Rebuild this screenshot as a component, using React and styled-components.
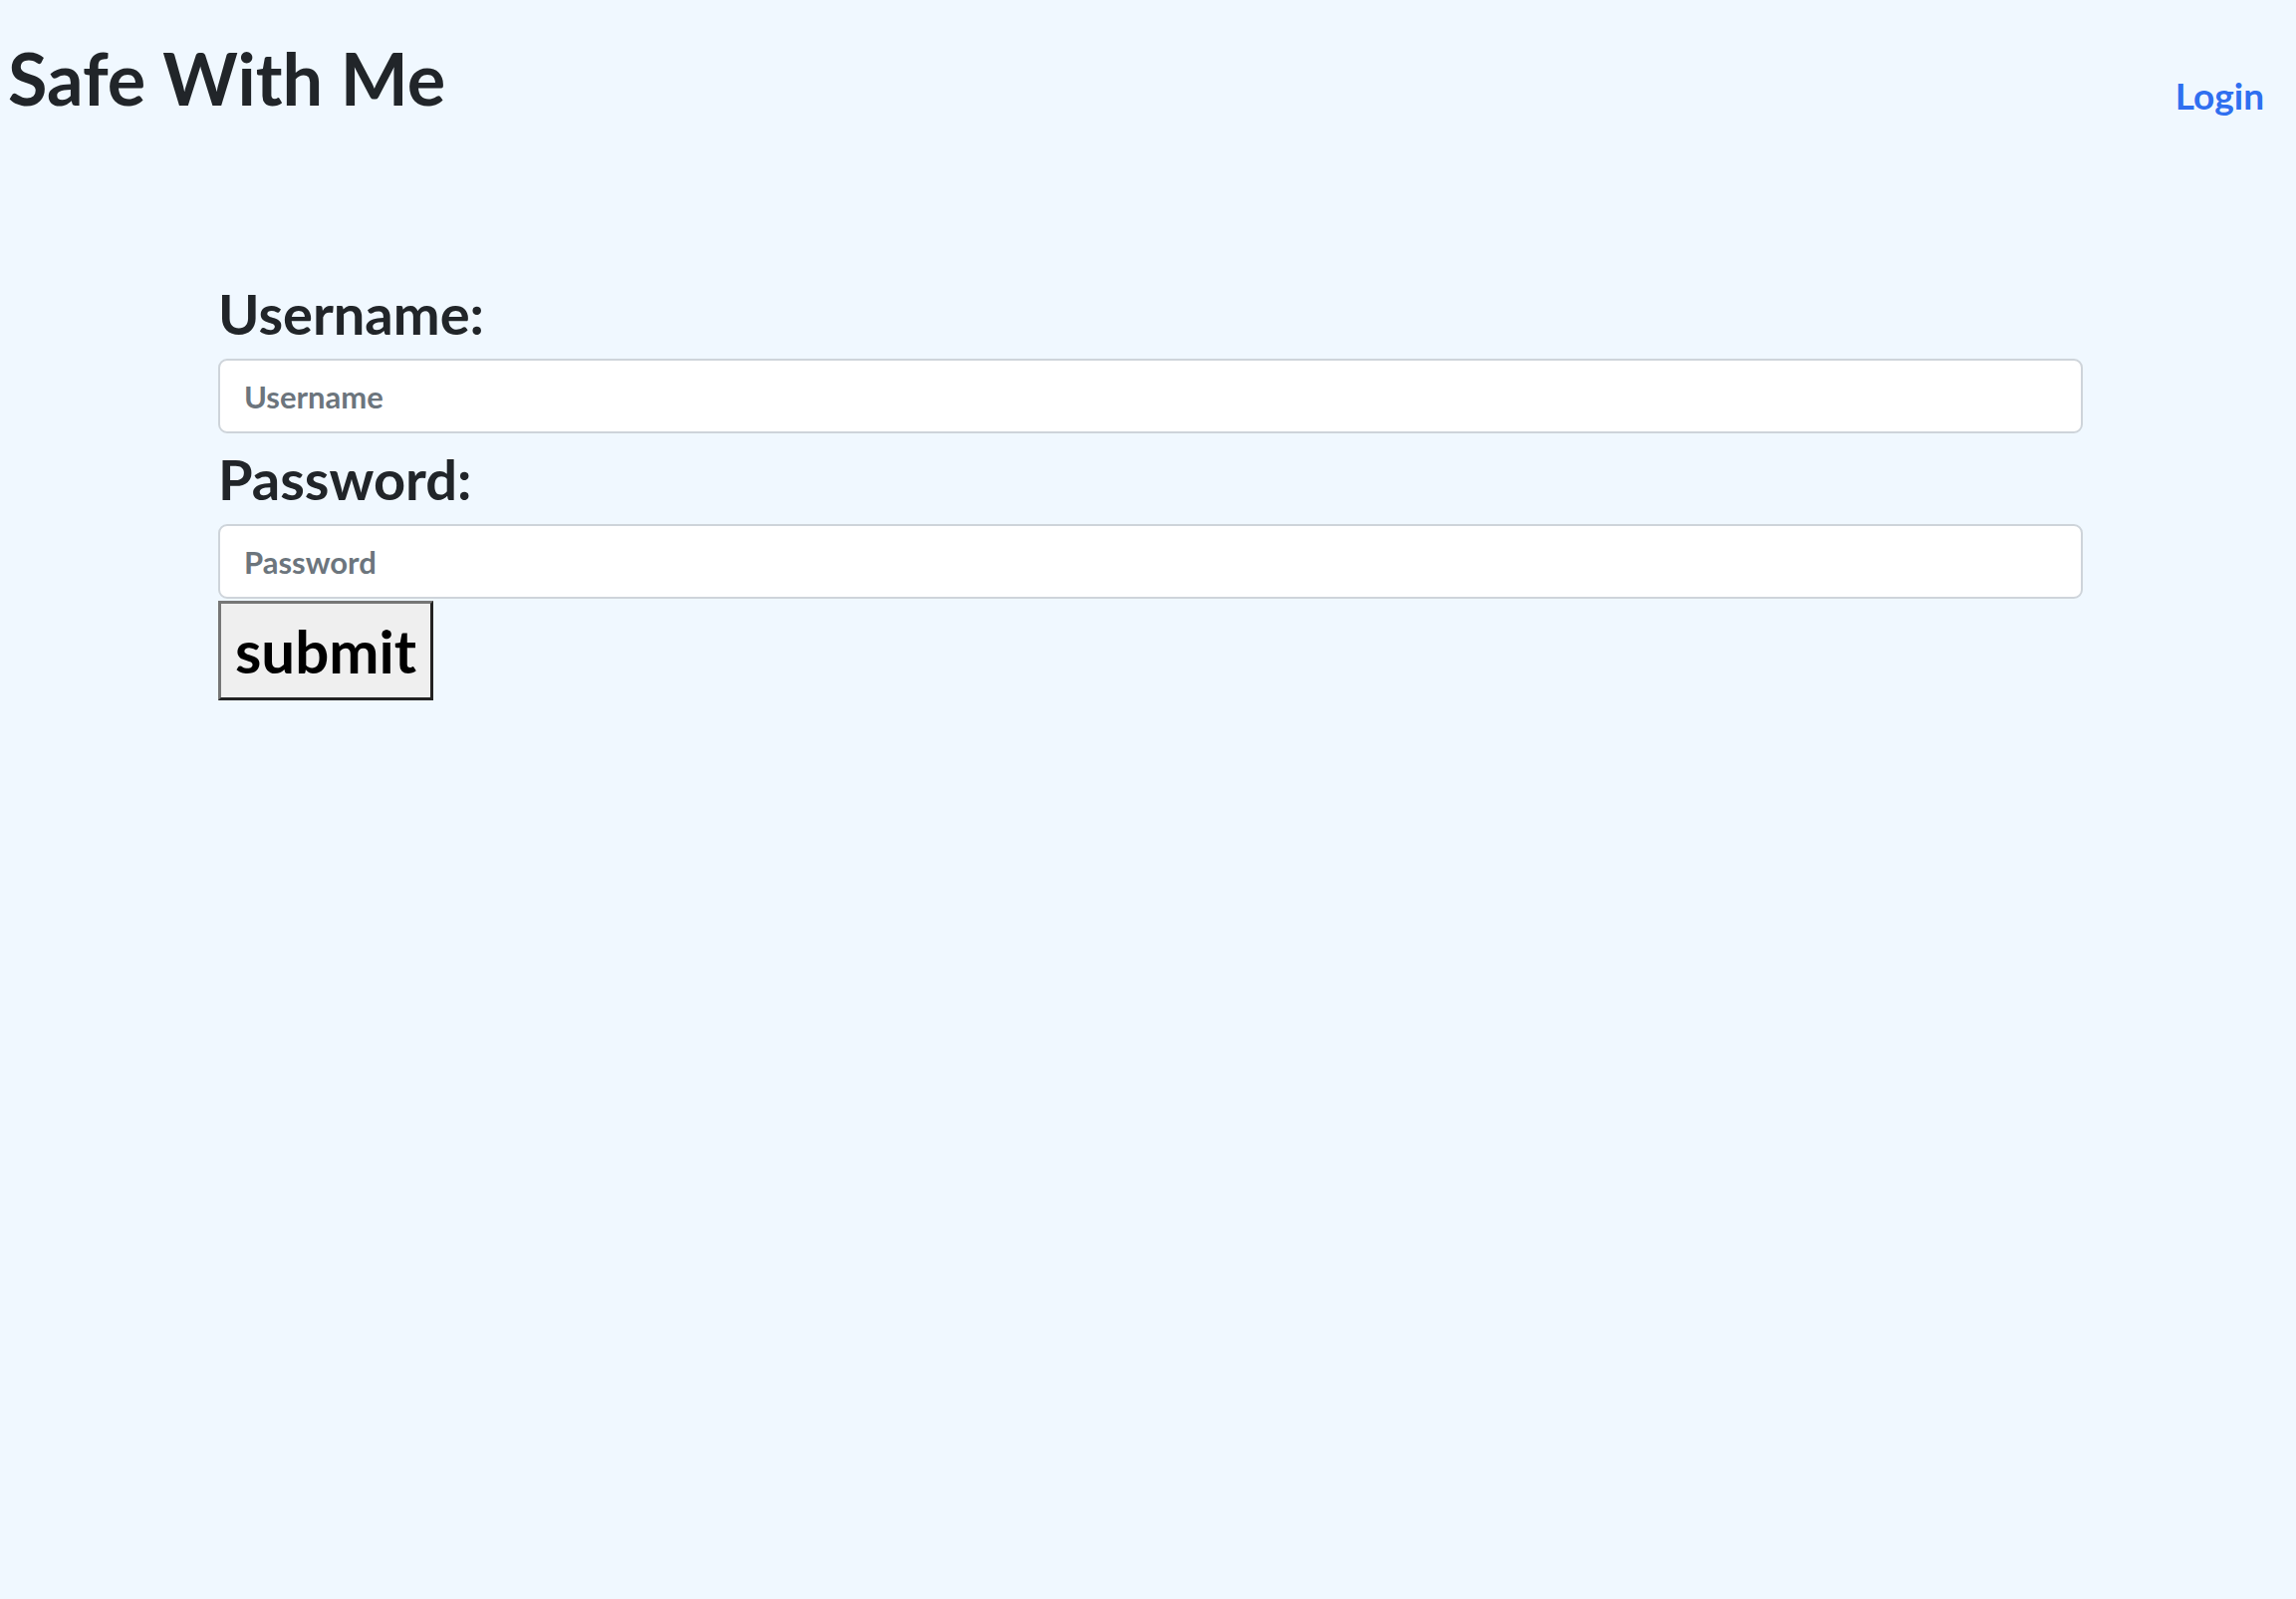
import React from 'react';
import styled, { createGlobalStyle } from 'styled-components';

const Global = createGlobalStyle`
  html, body {
    margin: 0;
    padding: 0;
    background: #f0f8ff;
    font-family: Lato, "Noto Sans", sans-serif;
    color: #212529;
  }
`;

const Header = styled.header`
  display: flex;
  justify-content: space-between;
  align-items: baseline;
  padding: 35px 32px 0 8px;
`;

const Title = styled.h1`
  margin: 0;
  font-size: 72px;
  line-height: 86px;
  font-weight: 700;
`;

const NavLink = styled.a`
  position: relative;
  top: 4px;
  font-size: 37px;
  font-weight: 700;
  color: #2f6ff0;
  text-decoration: none;
`;

const Form = styled.form`
  width: 1872px;
  margin: 163px 0 0 219px;
  display: flex;
  flex-direction: column;
  align-items: flex-start;
`;

const Label = styled.label`
  font-size: 56px;
  line-height: 62px;
  font-weight: 700;
  margin-bottom: 14px;
  & + input + & {
    margin-top: 15px;
  }
`;

const Input = styled.input`
  box-sizing: border-box;
  width: 100%;
  height: 75px;
  padding: 0 24px;
  border: 2px solid #ced4da;
  border-radius: 9px;
  background: #fff;
  font-family: inherit;
  font-size: 31px;
  font-weight: 700;
  color: #212529;
  outline: none;
  &::placeholder {
    color: #6c757d;
  }
`;

const Submit = styled.button`
  margin-top: 2px;
  height: 100px;
  padding: 0 14px;
  background: #efefef;
  border: 3px solid;
  border-color: #767676 #222 #222 #767676;
  font-family: inherit;
  font-size: 60px;
  font-weight: 700;
  color: #000;
`;

export default function App() {
  return (
    <>
      <Global />
      <Header>
        <Title>Safe With Me</Title>
        <NavLink href="#">Login</NavLink>
      </Header>
      <Form onSubmit={e => e.preventDefault()}>
        <Label htmlFor="username">Username:</Label>
        <Input id="username" type="text" placeholder="Username" />
        <Label htmlFor="password">Password:</Label>
        <Input id="password" type="password" placeholder="Password" />
        <Submit type="submit">submit</Submit>
      </Form>
    </>
  );
}
